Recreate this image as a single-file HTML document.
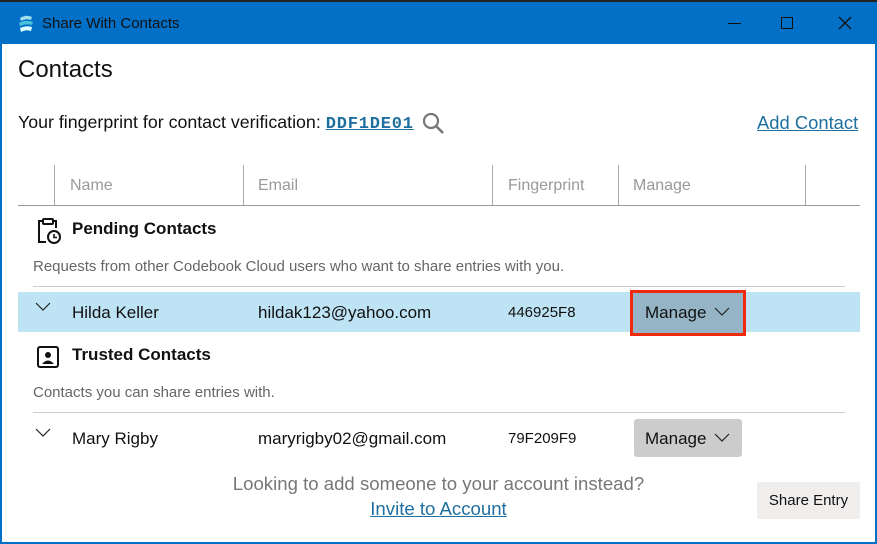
<!DOCTYPE html>
<html><head><meta charset="utf-8"><style>
*{margin:0;padding:0;box-sizing:border-box}
body{width:877px;height:544px;overflow:hidden;background:#fff;font-family:"Liberation Sans",sans-serif;position:relative;color:#111}
.a{position:absolute;white-space:nowrap}
.vl{position:absolute;width:1px;background:#aaa;top:165px;height:40px}
.g{color:#999;font-size:16px}
.link{color:#1f6f9f;text-decoration:underline}
</style></head><body>
<div class="a" style="left:0;top:0;width:877px;height:3px;background:#222"></div>
<div class="a" style="left:0;top:2px;width:877px;height:542px;border:2px solid #0170c6;border-top:0"></div>
<div class="a" style="left:0;top:2px;width:877px;height:42px;background:#0170c6"></div>
<svg class="a" style="left:17px;top:14px" width="18" height="20" viewBox="0 0 18 20"><path d="M3 4 Q9 0 15 3 L14 6 Q9 4 4 7Z" fill="#9fe0ef"/><path d="M2 9 Q9 5 16 8 L15 11 Q9 9 3 12Z" fill="#4cc3de"/><path d="M3 14 Q9 11 15 13 L14 17 Q9 15 4 18Z" fill="#dff"/></svg>
<div class="a" style="left:42px;top:15px;font-size:15px;color:#111">Share With Contacts</div>
<div class="a" style="left:728px;top:23px;width:13px;height:1px;background:#111"></div>
<div class="a" style="left:781px;top:17px;width:12px;height:12px;border:1px solid #111"></div>
<svg class="a" style="left:838px;top:16px" width="14" height="14"><path d="M1 1L13 13M13 1L1 13" stroke="#111" stroke-width="1.3"/></svg>
<div class="a" style="left:18px;top:56px;font-size:24px">Contacts</div>
<div class="a" style="left:18px;top:112px;font-size:17.8px">Your fingerprint for contact verification: <span class="link" style="font-family:'Liberation Mono',monospace;font-weight:bold;font-size:17px;letter-spacing:0.8px">DDF1DE01</span></div>
<svg class="a" style="left:422px;top:112px" width="24" height="24"><circle cx="9" cy="9" r="7" fill="none" stroke="#777" stroke-width="2.2"/><path d="M14 14L21 21" stroke="#777" stroke-width="2.6"/></svg>
<div class="a link" style="left:757px;top:112px;font-size:18.4px">Add Contact</div>
<div class="vl" style="left:54px"></div><div class="vl" style="left:243px"></div><div class="vl" style="left:492px"></div><div class="vl" style="left:618px"></div><div class="vl" style="left:805px"></div>
<div class="a" style="left:18px;top:205px;width:842px;height:1px;background:#999"></div>
<div class="a g" style="left:70px;top:177px">Name</div>
<div class="a g" style="left:258px;top:177px">Email</div>
<div class="a g" style="left:508px;top:177px">Fingerprint</div>
<div class="a g" style="left:633px;top:177px">Manage</div>
<svg class="a" style="left:35px;top:217px" width="28" height="28" viewBox="0 0 28 28"><path d="M9 4H4V25H11" fill="none" stroke="#111" stroke-width="2"/><path d="M17 4H21V11" fill="none" stroke="#111" stroke-width="2"/><rect x="8" y="2" width="10" height="5" rx="1" fill="none" stroke="#111" stroke-width="2"/><circle cx="19" cy="20" r="6" fill="none" stroke="#111" stroke-width="2"/><path d="M19 17V20.5H22" fill="none" stroke="#111" stroke-width="1.6"/></svg>
<div class="a" style="left:72px;top:219px;font-size:17px;font-weight:bold">Pending Contacts</div>
<div class="a" style="left:33px;top:258px;font-size:15px;color:#666">Requests from other Codebook Cloud users who want to share entries with you.</div>
<div class="a" style="left:33px;top:286px;width:812px;height:1px;background:#ccc"></div>
<div class="a" style="left:18px;top:292px;width:842px;height:40px;background:#bee3f4"></div>
<svg class="a" style="left:35px;top:302px" width="16" height="10"><path d="M1 1L8 8L15 1" fill="none" stroke="#222" stroke-width="1.2"/></svg>
<div class="a" style="left:72px;top:303px;font-size:17px">Hilda Keller</div>
<div class="a" style="left:258px;top:303px;font-size:17px">hildak123@yahoo.com</div>
<div class="a" style="left:508px;top:304px;font-size:15px">446925F8</div>
<div class="a" style="left:630px;top:290px;width:116px;height:46px;border:3px solid #ee2a0c;background:#95b5c6"></div>
<div class="a" style="left:645px;top:303px;font-size:17px">Manage</div>
<svg class="a" style="left:714px;top:307px" width="16" height="10"><path d="M1 1L8 8L15 1" fill="none" stroke="#222" stroke-width="1.2"/></svg>
<svg class="a" style="left:36px;top:345px" width="24" height="24"><rect x="2" y="2" width="20" height="20" rx="2" fill="none" stroke="#111" stroke-width="2"/><circle cx="12" cy="10" r="3" fill="#111"/><path d="M6 19Q12 12 18 19Z" fill="#111"/></svg>
<div class="a" style="left:72px;top:345px;font-size:17px;font-weight:bold">Trusted Contacts</div>
<div class="a" style="left:33px;top:384px;font-size:15px;color:#666">Contacts you can share entries with.</div>
<div class="a" style="left:33px;top:412px;width:812px;height:1px;background:#ccc"></div>
<svg class="a" style="left:35px;top:428px" width="16" height="10"><path d="M1 1L8 8L15 1" fill="none" stroke="#222" stroke-width="1.2"/></svg>
<div class="a" style="left:72px;top:429px;font-size:17px">Mary Rigby</div>
<div class="a" style="left:258px;top:429px;font-size:17px">maryrigby02@gmail.com</div>
<div class="a" style="left:508px;top:430px;font-size:15px">79F209F9</div>
<div class="a" style="left:634px;top:419px;width:108px;height:38px;background:#cccccc;border-radius:3px"></div>
<div class="a" style="left:645px;top:429px;font-size:17px">Manage</div>
<svg class="a" style="left:714px;top:433px" width="16" height="10"><path d="M1 1L8 8L15 1" fill="none" stroke="#222" stroke-width="1.2"/></svg>
<div class="a" style="left:0;width:877px;text-align:center;top:473px;font-size:18.6px;color:#777">Looking to add someone to your account instead?</div>
<div class="a link" style="left:0;width:877px;text-align:center;top:498px;font-size:18.6px">Invite to Account</div>
<div class="a" style="left:757px;top:482px;width:103px;height:37px;background:#f0eded;border-radius:2px;font-size:15px;text-align:center;line-height:38px">Share Entry</div>
</body></html>
